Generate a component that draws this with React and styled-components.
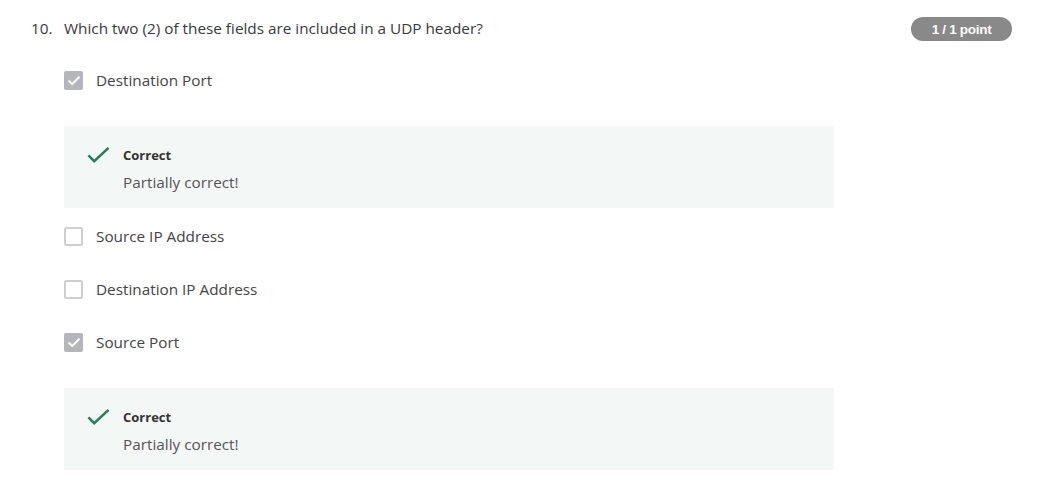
import React from "react";
import styled, { createGlobalStyle } from "styled-components";

const Global = createGlobalStyle`
  html, body { margin: 0; padding: 0; background: #fff; }
  body { font-family: "Open Sans", "Noto Sans", sans-serif; color: #333; }
`;

const Page = styled.div`
  padding: 17px 48px 0 31px;
`;

const Header = styled.div`
  display: flex;
  align-items: center;
  height: 24px;
`;

const Number = styled.span`
  width: 33px;
  font-size: 15.3px;
  line-height: 20px;
  margin-top: -2px;
  color: #373a3c;
`;

const Question = styled.span`
  flex: 1;
  font-size: 15.3px;
  line-height: 20px;
  margin-top: -2px;
  color: #373a3c;
`;

const Badge = styled.span`
  width: 101px;
  height: 24px;
  border-radius: 12px;
  background: #898989;
  color: #fff;
  font-family: "Liberation Sans", Arial, sans-serif;
  font-weight: 700;
  font-size: 13.5px;
  display: flex;
  align-items: center;
  justify-content: center;
  letter-spacing: -0.3px;
`;

const Options = styled.div`
  margin-top: 29px;
  padding-left: 33px;
  display: flex;
  flex-direction: column;
`;

const Item = styled.div`
  display: flex;
  flex-direction: column;
  margin-bottom: ${(p) => (p.$feedback ? "18px" : "33px")};
`;

const Row = styled.label`
  display: flex;
  align-items: center;
  height: 20px;
  gap: 13px;
`;

const Box = styled.span`
  width: 19px;
  height: 19px;
  box-sizing: border-box;
  border-radius: 2px;
  display: flex;
  align-items: center;
  justify-content: center;
  background: ${(p) => (p.$checked ? "#b3b6ba" : "#fff")};
  border: ${(p) => (p.$checked ? "none" : "2px solid #cfcfcf")};
`;

const Label = styled.span`
  font-size: 15.3px;
  line-height: 20px;
  color: #444;
`;

const Feedback = styled.div`
  margin-top: 36px;
  width: 770px;
  box-sizing: border-box;
  background: #f3f8f6;
  padding: 20px 0 16px 23px;
  display: flex;
  gap: 13px;
`;

const FeedbackText = styled.div`
  display: flex;
  flex-direction: column;
  gap: 8px;
`;

const Title = styled.div`
  font-size: 13px;
  font-weight: 700;
  line-height: 18px;
  color: #333;
`;

const Message = styled.div`
  font-size: 15.3px;
  line-height: 20px;
  color: #555;
`;

const IconWrap = styled.span`
  width: 23px;
  height: 18px;
  display: flex;
`;

const CheckMark = () => (
  <IconWrap>
    <svg width="24" height="18" viewBox="0 0 24 18">
      <path d="M1.5 9.5 L7.5 15.5 L22.5 1.5" fill="none" stroke="#1f8354" strokeWidth="2.6" strokeLinejoin="miter" />
    </svg>
  </IconWrap>
);

const Check = ({ checked }) => (
  <Box $checked={checked}>
    {checked && (
      <svg width="14" height="11" viewBox="0 0 14 11">
        <path d="M1.5 5.5 L5.2 9 L12.5 1.8" fill="none" stroke="#fff" strokeWidth="2" />
      </svg>
    )}
  </Box>
);

const options = [
  { text: "Destination Port", checked: true, feedback: true },
  { text: "Source IP Address", checked: false },
  { text: "Destination IP Address", checked: false },
  { text: "Source Port", checked: true, feedback: true },
];

export default function App() {
  return (
    <Page>
      <Global />
      <Header>
        <Number>10.</Number>
        <Question>Which two (2) of these fields are included in a UDP header?</Question>
        <Badge>1 / 1 point</Badge>
      </Header>
      <Options>
        {options.map((o) => (
          <Item key={o.text} $feedback={o.feedback}>
            <Row>
              <Check checked={o.checked} />
              <Label>{o.text}</Label>
            </Row>
            {o.feedback && (
              <Feedback>
                <CheckMark />
                <FeedbackText>
                  <Title>Correct</Title>
                  <Message>Partially correct!</Message>
                </FeedbackText>
              </Feedback>
            )}
          </Item>
        ))}
      </Options>
    </Page>
  );
}
